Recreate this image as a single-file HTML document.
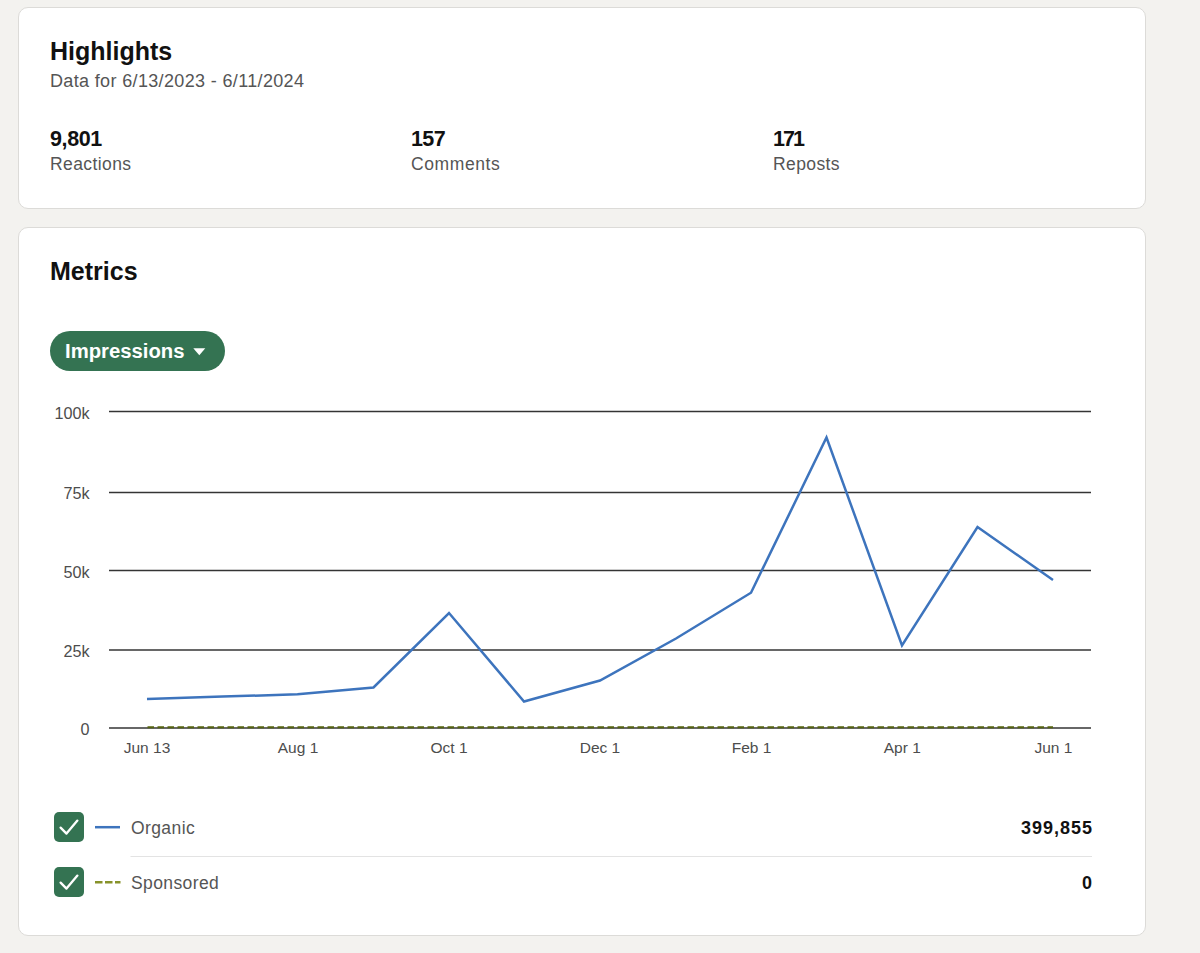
<!DOCTYPE html>
<html><head><meta charset="utf-8">
<style>
html,body{margin:0;padding:0;}
body{width:1200px;height:953px;background:#f3f2ef;position:relative;overflow:hidden;font-family:"Liberation Sans",sans-serif;}
.card{position:absolute;background:#fff;border:1px solid #dcdbd8;border-radius:10px;box-sizing:border-box;}
.t{position:absolute;white-space:nowrap;line-height:1;}
.h{font-weight:bold;color:#111;font-size:25px;}
.sub{color:#555;font-size:18px;letter-spacing:0.35px;}
.num{font-weight:bold;color:#111;font-size:21.5px;}
.lbl{color:#555;font-size:17.5px;letter-spacing:0.4px;}
.ax{color:#4d4d4d;font-size:15.5px;}
.ay{font-size:16.2px;}
.xl{transform:translateX(-50%);}
.yl{transform:translateX(-100%);}
</style></head><body>
<div class="card" style="left:18px;top:7px;width:1128px;height:202px;"></div>
<div class="card" style="left:18px;top:227px;width:1128px;height:709px;"></div>

<div class="t h" style="left:50px;top:39.3px;">Highlights</div>
<div class="t sub" style="left:50px;top:72px;">Data for 6/13/2023 - 6/11/2024</div>

<div class="t num" style="left:50px;top:128.5px;letter-spacing:-0.4px;">9,801</div>
<div class="t lbl" style="left:50px;top:156px;">Reactions</div>
<div class="t num" style="left:411px;top:128.5px;letter-spacing:-0.6px;">157</div>
<div class="t lbl" style="left:411px;top:156px;letter-spacing:0.6px;">Comments</div>
<div class="t num" style="left:773px;top:128.5px;letter-spacing:-2px;">171</div>
<div class="t lbl" style="left:773px;top:156px;">Reposts</div>

<div class="t h" style="left:50px;top:259.3px;">Metrics</div>

<div style="position:absolute;left:50px;top:331px;width:175px;height:40px;border-radius:20px;background:#347352;"></div>
<div class="t" style="left:65px;top:341px;font-size:20.3px;font-weight:bold;color:#fff;">Impressions</div>

<svg style="position:absolute;left:0;top:0" width="1200" height="953">
  <polygon points="193.3,348.3 205.3,348.3 199.3,355.2" fill="#fff"/>
  <g stroke="#343434" stroke-width="1.5">
    <line x1="109" y1="411.6" x2="1091" y2="411.6"/>
    <line x1="109" y1="492.4" x2="1091" y2="492.4"/>
    <line x1="109" y1="570.5" x2="1091" y2="570.5"/>
    <line x1="109" y1="649.9" x2="1091" y2="649.9"/>
    <line x1="109" y1="728" x2="1091" y2="728"/>
  </g>
  <line x1="147.5" y1="727.2" x2="1053" y2="727.2" stroke="#55630f" stroke-width="2" stroke-dasharray="6.5,3.5"/>
  <polyline fill="none" stroke="#3d74bd" stroke-width="2.5" stroke-linejoin="miter" points="147,699 222.5,696.6 297.5,694.3 373.5,687.5 449,613 524,701.5 600,680.5 676,638.5 751,592.7 826.5,437.5 902,645.5 977.5,527 1053,580"/>
  <line x1="95" y1="827.2" x2="120" y2="827.2" stroke="#3d74bd" stroke-width="2.5"/>
  <line x1="95" y1="882.3" x2="120.5" y2="882.3" stroke="#87922a" stroke-width="2.5" stroke-dasharray="7.5,2.5"/>
  <line x1="130.5" y1="856.5" x2="1092" y2="856.5" stroke="#e3e3e3" stroke-width="1"/>
</svg>

<div class="t ax ay yl" style="left:89.5px;top:405px;">100k</div>
<div class="t ax ay yl" style="left:89.5px;top:485px;">75k</div>
<div class="t ax ay yl" style="left:89.5px;top:564px;">50k</div>
<div class="t ax ay yl" style="left:89.5px;top:643px;">25k</div>
<div class="t ax ay yl" style="left:89.5px;top:721px;">0</div>

<div class="t ax xl" style="left:147px;top:740px;">Jun 13</div>
<div class="t ax xl" style="left:298px;top:740px;">Aug 1</div>
<div class="t ax xl" style="left:449px;top:740px;">Oct 1</div>
<div class="t ax xl" style="left:600px;top:740px;">Dec 1</div>
<div class="t ax xl" style="left:751.5px;top:740px;">Feb 1</div>
<div class="t ax xl" style="left:902.3px;top:740px;">Apr 1</div>
<div class="t ax xl" style="left:1053.4px;top:740px;">Jun 1</div>

<div style="position:absolute;left:54px;top:812px;width:30px;height:30px;border-radius:5px;background:#347352;"></div>
<div style="position:absolute;left:54px;top:867px;width:30px;height:30px;border-radius:5px;background:#347352;"></div>
<svg style="position:absolute;left:0;top:0" width="1200" height="953">
  <polyline points="60.6,827.6 66.5,833.6 77.4,820.6" fill="none" stroke="#fff" stroke-width="2.3" stroke-linecap="round" stroke-linejoin="round"/>
  <polyline points="60.6,882.6 66.5,888.6 77.4,875.6" fill="none" stroke="#fff" stroke-width="2.3" stroke-linecap="round" stroke-linejoin="round"/>
</svg>
<div class="t lbl" style="left:131px;top:820px;">Organic</div>
<div class="t lbl" style="left:131px;top:875px;">Sponsored</div>
<div class="t" style="right:107px;top:818.5px;font-size:18px;font-weight:bold;color:#111;letter-spacing:1px;">399,855</div>
<div class="t" style="right:108px;top:873.5px;font-size:18px;font-weight:bold;color:#111;">0</div>
</body></html>
